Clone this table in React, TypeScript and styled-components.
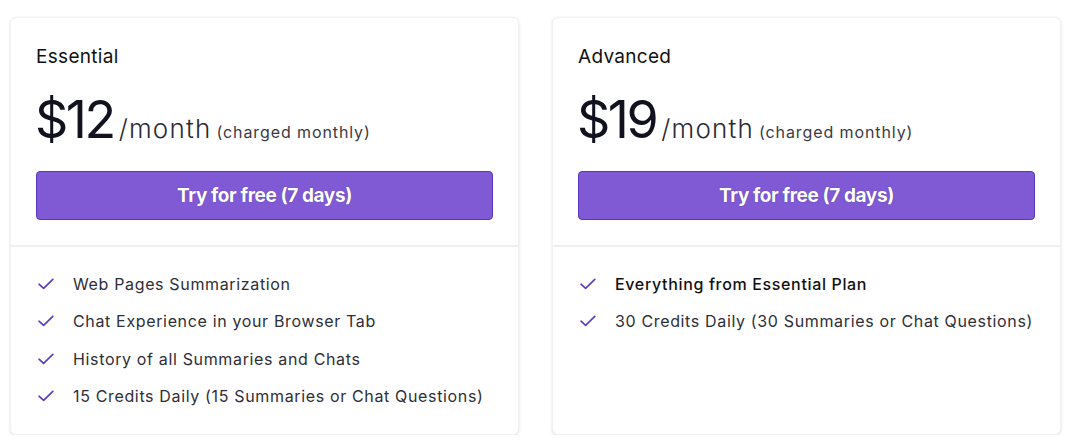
import * as React from "react";
import styled, { createGlobalStyle } from "styled-components";

const GlobalStyle = createGlobalStyle`
  body {
    margin: 0;
    background: #fff;
    font-family: "Inter", "Liberation Sans", sans-serif;
    color: #1a1a2e;
  }
`;

const Page = styled.main`
  display: flex;
  gap: 33px;
  padding: 17px 9px 0 10px;
  align-items: stretch;
`;

const Card = styled.section`
  width: 509px;
  box-sizing: border-box;
  border: 1px solid #f1f1f3;
  border-radius: 6px;
  box-shadow: 0 1px 3px rgba(0, 0, 0, 0.12);
  background: #fff;
`;

const CardHead = styled.div`
  padding: 27px 25px 25px;
  border-bottom: 2px solid #efeff2;
`;

const PlanName = styled.h3`
  margin: 0;
  font-size: 19px;
  line-height: 24px;
  font-weight: 400;
  letter-spacing: 0.3px;
  color: #111;
`;

const PriceRow = styled.div`
  display: flex;
  align-items: baseline;
  margin-top: 25px;
  line-height: 1;
  white-space: nowrap;
`;

const Amount = styled.span`
  font-size: 52px;
  font-weight: 400;
  letter-spacing: -2.5px;
  margin-left: -1px;
  color: #12121f;
`;

const Period = styled.span`
  margin-left: 5px;
  font-size: 26px;
  font-weight: 300;
  letter-spacing: 1.2px;
  color: #2a2a35;
`;

const Note = styled.span`
  margin-left: 5px;
  font-size: 16px;
  letter-spacing: 0.9px;
  color: #3a3a44;
`;

const TryButton = styled.button`
  display: block;
  width: 100%;
  height: 49px;
  margin-top: 25px;
  border: 1px solid #5a36c0;
  border-radius: 4px;
  background: #805ad5;
  color: #fff;
  font-family: inherit;
  font-size: 19px;
  font-weight: 700;
  letter-spacing: -0.4px;
  text-shadow: 0 0 1px rgba(40, 20, 90, 0.6);
  cursor: pointer;
`;

const Features = styled.ul`
  list-style: none;
  margin: 0;
  padding: 25px 25px 26px 27px;
  display: flex;
  flex-direction: column;
  gap: 13.3px;
`;

const Feature = styled.li<{ $strong?: boolean }>`
  display: flex;
  align-items: center;
  gap: 19px;
  font-size: 16px;
  line-height: 24px;
  letter-spacing: 0.65px;
  color: ${(p) => (p.$strong ? "#111" : "#2e2e38")};
  font-weight: ${(p) => (p.$strong ? 500 : 400)};
`;

const Check = () => (
  <svg width="16" height="12" viewBox="0 0 16 12" fill="none">
    <path d="M1 6.2 L5.6 10.4 L14.8 1.4" stroke="#5b3bc4" strokeWidth="1.6" strokeLinecap="round" strokeLinejoin="round" />
  </svg>
);

interface Plan {
  name: string;
  price: string;
  features: { text: string; strong?: boolean }[];
}

const plans: Plan[] = [
  {
    name: "Essential",
    price: "$12",
    features: [
      { text: "Web Pages Summarization" },
      { text: "Chat Experience in your Browser Tab" },
      { text: "History of all Summaries and Chats" },
      { text: "15 Credits Daily (15 Summaries or Chat Questions)" },
    ],
  },
  {
    name: "Advanced",
    price: "$19",
    features: [
      { text: "Everything from Essential Plan", strong: true },
      { text: "30 Credits Daily (30 Summaries or Chat Questions)" },
    ],
  },
];

export default function App() {
  return (
    <>
      <GlobalStyle />
      <Page>
        {plans.map((plan) => (
          <Card key={plan.name}>
            <CardHead>
              <PlanName>{plan.name}</PlanName>
              <PriceRow>
                <Amount>{plan.price}</Amount>
                <Period>/month</Period>
                <Note>(charged monthly)</Note>
              </PriceRow>
              <TryButton>Try for free (7 days)</TryButton>
            </CardHead>
            <Features>
              {plan.features.map((f) => (
                <Feature key={f.text} $strong={f.strong}>
                  <Check />
                  {f.text}
                </Feature>
              ))}
            </Features>
          </Card>
        ))}
      </Page>
    </>
  );
}
